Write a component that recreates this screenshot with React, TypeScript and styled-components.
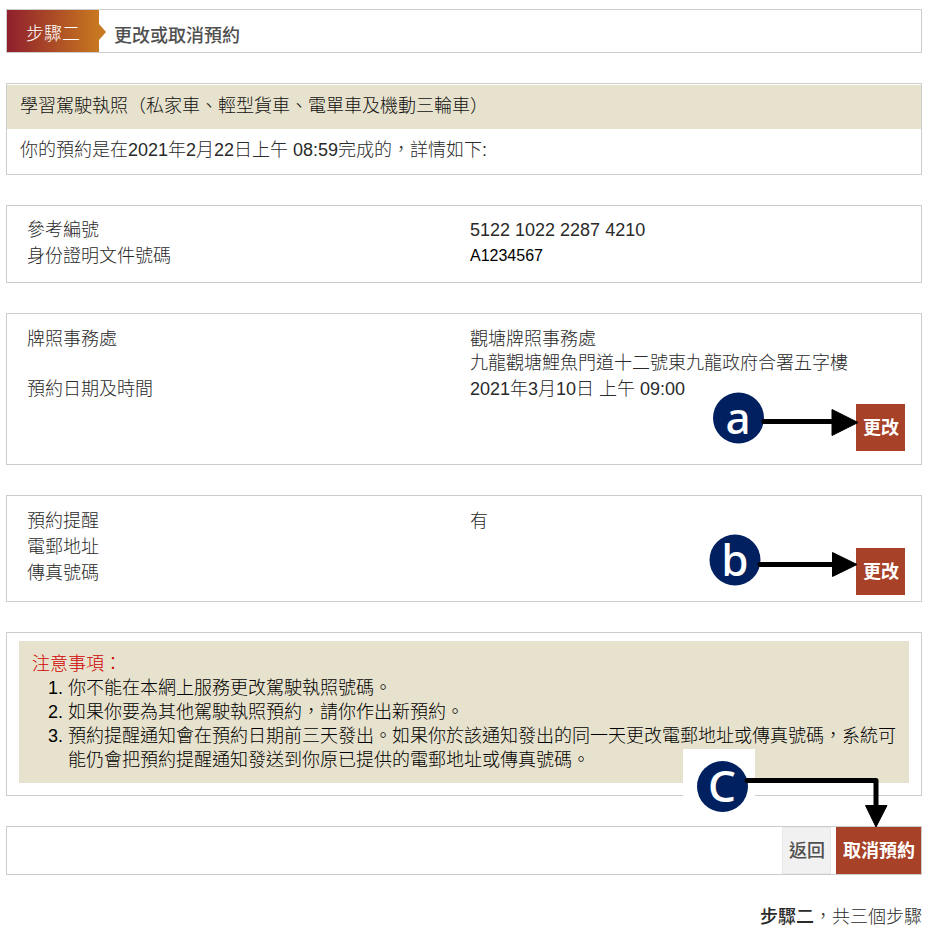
import React from "react";
import styled, { createGlobalStyle } from "styled-components";

const GlobalStyle = createGlobalStyle`
  *, *::before, *::after { box-sizing: border-box; }
  body {
    margin: 0;
    background: #fff;
    color: #2a2a2a;
    font: 300 18px/24px "Liberation Sans", "Noto Sans CJK TC", sans-serif;
  }
`;

const Page = styled.main`
  display: flex;
  flex-direction: column;
  gap: 30px;
  padding: 9px 8px 10px 6px;
`;

const Panel = styled.section`
  position: relative;
  border: 1px solid #ccc;
`;

const StepHeader = styled.header`
  display: flex;
  border: 1px solid #ccc;
`;

const StepTag = styled.div`
  position: relative;
  width: 92px;
  padding: 12px 0 6px 19px;
  color: #fff;
  background: linear-gradient(90deg, #8f1f2d, #c87820);

  &::after {
    content: "";
    position: absolute;
    left: 100%;
    top: 14px;
    border: 8px solid transparent;
    border-left: 7px solid #c87820;
    border-right: 0;
  }
`;

const StepTitle = styled.h1`
  margin: 0;
  padding: 14px 0 4px 15px;
  font-size: 18px;
  font-weight: 500;
  line-height: 24px;
  color: #505050;
`;

const LicenceTitle = styled.h2`
  margin: 1px 0 0;
  padding: 9px 13px 11px;
  font-size: 18px;
  font-weight: 300;
  line-height: 24px;
  color: #111;
  background: #e7e2cd;
`;

const Summary = styled.p`
  margin: 0;
  padding: 9px 13px 12px;
`;

const DetailPanel = styled(Panel)`
  padding: 11px 16px 13px 20px;
`;

const StackedPanel = styled(DetailPanel)`
  display: flex;
  flex-direction: column;
  gap: 2px;
  padding-top: 12px;
`;

const InlinePanel = styled(DetailPanel)`
  display: flex;
  align-items: flex-end;
  padding-top: 12px;
  padding-bottom: 6px;
`;

const Details = styled.dl<{ $below?: number }>`
  flex: 1;
  margin: 0;
  padding-bottom: ${(p) => p.$below ?? 0}px;
`;

const Row = styled.div`
  display: grid;
  grid-template-columns: minmax(0, 443px) 1fr;
  padding: 1px 0;
`;

const Label = styled.dt``;

const Value = styled.dd<{ $compact?: boolean }>`
  margin: 0;
  font-size: ${(p) => (p.$compact ? 16 : 18)}px;
  color: ${(p) => (p.$compact ? "#000" : "inherit")};
`;

const ActionSlot = styled.div`
  position: relative;
  align-self: flex-end;
  display: flex;
`;

const Button = styled.button<{ $plain?: boolean }>`
  padding: 12px 6px 11px 7px;
  border: 0;
  font: inherit;
  font-weight: ${(p) => (p.$plain ? 500 : 700)};
  color: ${(p) => (p.$plain ? "#505050" : "#fff")};
  background: ${(p) => (p.$plain ? "#f1f1f1" : "#a74128")};
  box-shadow: ${(p) => (p.$plain ? "inset 0 0 0 1px #e8e8e8" : "none")};
  cursor: pointer;
`;

const Callout = styled.svg<{ $right: number; $top: number }>`
  position: absolute;
  right: ${(p) => p.$right}px;
  top: ${(p) => p.$top}px;
  overflow: visible;
  pointer-events: none;

  text {
    font: 500 44px "Noto Sans", sans-serif;
    fill: #fff;
    text-anchor: middle;
  }
`;

const NoticePanel = styled(Panel)`
  padding: 8px 12px 12px;
`;

const Notice = styled.div`
  padding: 11px 13px;
  color: #000;
  background: #e7e2cd;
`;

const NoticeTitle = styled.h2`
  margin: 0;
  font-size: 18px;
  font-weight: 300;
  line-height: 24px;
  color: #d00000;
`;

const NoticeList = styled.ol`
  margin: 0;
  padding-left: 36px;
`;

const ActionBar = styled(Panel)`
  display: flex;
  justify-content: flex-end;
  gap: 5px;
`;

const Progress = styled.footer`
  text-align: right;

  strong { font-weight: 500; }
`;

const NAVY = "#00205f";

export default function App() {
  return (
    <>
      <GlobalStyle />
      <Page lang="zh-HK">
        <StepHeader>
          <StepTag>步驟二</StepTag>
          <StepTitle>更改或取消預約</StepTitle>
        </StepHeader>

        <Panel>
          <LicenceTitle>學習駕駛執照（私家車、輕型貨車、電單車及機動三輪車）</LicenceTitle>
          <Summary>你的預約是在2021年2月22日上午 08:59完成的，詳情如下:</Summary>
        </Panel>

        <DetailPanel>
          <Details>
            <Row>
              <Label>參考編號</Label>
              <Value>5122 1022 2287 4210</Value>
            </Row>
            <Row>
              <Label>身份證明文件號碼</Label>
              <Value $compact>A1234567</Value>
            </Row>
          </Details>
        </DetailPanel>

        <StackedPanel>
          <Details>
            <Row>
              <Label>牌照事務處</Label>
              <Value>
                觀塘牌照事務處
                <br />
                九龍觀塘鯉魚門道十二號東九龍政府合署五字樓
              </Value>
            </Row>
            <Row>
              <Label>預約日期及時間</Label>
              <Value>2021年3月10日 上午 09:00</Value>
            </Row>
          </Details>
          <ActionSlot>
            <Button type="button">更改</Button>
            <Callout $right={46} $top={-12} width="146" height="52" viewBox="0 0 146 52" aria-hidden="true">
              <circle cx="25.5" cy="26" r="25.5" fill={NAVY} />
              <text x="25" y="42">a</text>
              <path d="M51 29.5H120" stroke="#000" strokeWidth="5" strokeLinecap="round" />
              <path d="M119 17.5L145 30.5L119 43.5Z" stroke="#000" strokeLinejoin="round" />
            </Callout>
          </ActionSlot>
        </StackedPanel>

        <InlinePanel>
          <Details $below={9}>
            <Row>
              <Label>預約提醒</Label>
              <Value>有</Value>
            </Row>
            <Row>
              <Label>電郵地址</Label>
              <Value />
            </Row>
            <Row>
              <Label>傳真號碼</Label>
              <Value />
            </Row>
          </Details>
          <ActionSlot>
            <Button type="button">更改</Button>
            <Callout $right={46} $top={-14} width="150" height="52" viewBox="0 0 150 52" aria-hidden="true">
              <circle cx="26" cy="26" r="25.5" fill={NAVY} />
              <text x="26" y="42">b</text>
              <path d="M51 30.5H125" stroke="#000" strokeWidth="5" strokeLinecap="round" />
              <path d="M123.5 18.5L148 30.5L123.5 42.5Z" stroke="#000" strokeLinejoin="round" />
            </Callout>
          </ActionSlot>
        </InlinePanel>

        <NoticePanel>
          <Notice>
            <NoticeTitle>注意事項：</NoticeTitle>
            <NoticeList>
              <li>你不能在本網上服務更改駕駛執照號碼。</li>
              <li>如果你要為其他駕駛執照預約，請你作出新預約。</li>
              <li>
                預約提醒通知會在預約日期前三天發出。如果你於該通知發出的同一天更改電郵地址或傳真號碼，系統可能仍會把預約提醒通知發送到你原已提供的電郵地址或傳真號碼。
              </li>
            </NoticeList>
          </Notice>
        </NoticePanel>

        <ActionBar as="nav">
          <Button type="button" $plain>返回</Button>
          <ActionSlot>
            <Button type="button">取消預約</Button>
            <Callout $right={32} $top={-78} width="206" height="79" viewBox="0 0 206 79" aria-hidden="true">
              <rect width="72" height="72" fill="#fff" />
              <circle cx="39.5" cy="37.5" r="25.5" fill={NAVY} />
              <text x="39" y="53">C</text>
              <path d="M64 31.5H193V60" fill="none" stroke="#000" strokeWidth="5" strokeLinecap="round" strokeLinejoin="round" />
              <path d="M182.5 56.5H204L193 78Z" stroke="#000" strokeLinejoin="round" />
            </Callout>
          </ActionSlot>
        </ActionBar>

        <Progress>
          <strong>步驟二</strong>，共三個步驟
        </Progress>
      </Page>
    </>
  );
}
